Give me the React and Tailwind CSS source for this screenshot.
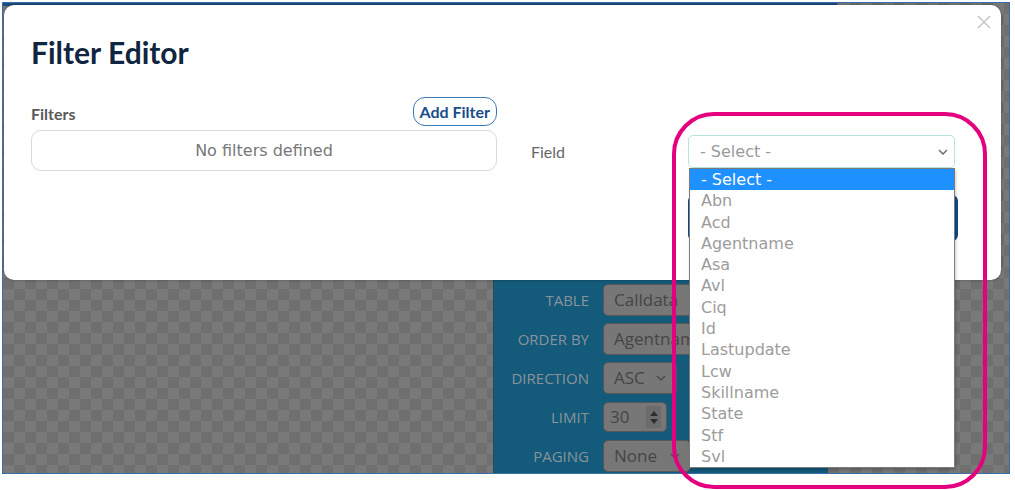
import React from "react";

const fields = [
  "Abn",
  "Acd",
  "Agentname",
  "Asa",
  "Avl",
  "Ciq",
  "Id",
  "Lastupdate",
  "Lcw",
  "Skillname",
  "State",
  "Stf",
  "Svl",
];

const gothic = "font-['DejaVu_Sans',sans-serif]";
const sans = "font-['Lato','Open_Sans',sans-serif]";
const panelFont = "font-['Open_Sans',sans-serif]";

function Chevron({ className = "" }) {
  return (
    <svg width="10" height="6" viewBox="0 0 10 6" className={className}>
      <polyline points="1,1 5,5 9,1" fill="none" stroke="currentColor" strokeWidth="1.4" />
    </svg>
  );
}

function PanelRow({ label, children }) {
  return (
    <div className="flex items-center h-[32px]">
      <div className="w-[95px] text-right text-[15px] text-[#8a939a] uppercase">{label}</div>
      <div className="ml-[14px] flex">{children}</div>
    </div>
  );
}

function PanelInput({ width, children }) {
  return (
    <div
      className={`${width} h-[32px] flex items-center justify-between rounded-[5px] border border-[#575757] bg-[#777777] px-[10px] text-[17px] text-[#454545]`}
    >
      {children}
    </div>
  );
}

export default function App() {
  return (
    <div className={`relative w-[1015px] h-[490px] bg-white overflow-hidden ${sans}`}>
      {/* captured page with modal backdrop */}
      <div className="relative ml-[2px] mt-[2px] w-[1008px] h-[472px] border border-[#3a6ea8] overflow-hidden bg-[conic-gradient(#6f6f6f_25%,#797979_0_50%,#6f6f6f_0_75%,#797979_0)] bg-[length:22px_22px]">
        <div className="h-[3px] w-[834px] bg-[#1d4b7c]" />

        {/* query settings panel behind the dialog */}
        <div className={`ml-[490px] mt-[269px] w-[335px] h-[200px] bg-[#135a7b] border-l border-[#2a4a5a] pt-[9px] flex flex-col gap-[7px] ${panelFont}`}>
          <PanelRow label="Table">
            <PanelInput width="w-[200px]">Calldata</PanelInput>
          </PanelRow>
          <PanelRow label="Order by">
            <PanelInput width="w-[200px]">Agentname</PanelInput>
          </PanelRow>
          <PanelRow label="Direction">
            <PanelInput width="w-[74px]">
              <span>ASC</span>
              <Chevron className="text-[#4a4a4a]" />
            </PanelInput>
          </PanelRow>
          <PanelRow label="Limit">
            <div className="w-[64px] h-[30px] flex items-center justify-between rounded-[5px] border border-[#575757] bg-[#777777] pl-[6px] pr-[5px] text-[17px] text-[#454545]">
              <span>30</span>
              <div className="w-[15px] h-[22px] bg-[#6c6c6c] flex flex-col items-center justify-center gap-[3px]">
                <div className="w-0 h-0 border-x-[4px] border-x-transparent border-b-[5px] border-b-[#2e2e2e]" />
                <div className="w-0 h-0 border-x-[4px] border-x-transparent border-t-[5px] border-t-[#2e2e2e]" />
              </div>
            </div>
          </PanelRow>
          <PanelRow label="Paging">
            <PanelInput width="w-[88px]">
              <span>None</span>
              <Chevron className="text-[#4a4a4a]" />
            </PanelInput>
          </PanelRow>
        </div>

        {/* filter editor dialog */}
        <div className="absolute left-[1px] top-[2px] w-[997px] h-[275px] bg-white rounded-[10px] shadow-[0_0_3px_rgba(0,0,0,0.35)]">
          <button className="absolute right-[10px] top-[10px] w-[14px] h-[14px]">
            <svg width="14" height="14" viewBox="0 0 14 14">
              <path d="M1 1 L13 13 M13 1 L1 13" stroke="#c9c9c9" strokeWidth="1.6" />
            </svg>
          </button>

          <div className="pl-[27px] pt-[30px]">
            <h2 className="text-[30px] leading-[34px] font-bold text-[#0f2540]">Filter Editor</h2>

            <div className="flex mt-[28px]">
              <div className="w-[466px]">
                <div className="flex items-end justify-between">
                  <span className="text-[16px] font-bold text-[#5a5a5a] leading-[20px] mb-[2px]">Filters</span>
                  <button className="h-[29px] px-[6px] rounded-[12px] border-[1.5px] border-[#3a78bb] text-[16px] font-bold text-[#1a4e8a]">
                    Add Filter
                  </button>
                </div>
                <div className={`mt-[4px] h-[41px] rounded-[10px] border border-[#d9d9d9] flex items-center justify-center text-[16px] text-[#777] ${gothic}`}>
                  No filters defined
                </div>
              </div>

              <div className="ml-[34px] mt-[38px] flex items-start">
                <span className="w-[157px] h-[33px] flex items-center text-[16px] text-[#666]">Field</span>
                <div className="flex flex-col">
                  <div className="relative w-[267px]">
                    <div className={`h-[33px] rounded-[5px] border border-[#b8e2de] flex items-center justify-between pl-[11px] pr-[6px] text-[16px] text-[#9a9a9a] ${gothic}`}>
                      <span>- Select -</span>
                      <Chevron className="text-[#666]" />
                    </div>

                    {/* open option list */}
                    <div className={`absolute z-10 left-[1px] top-[33px] w-[266px] bg-white border border-[#7b7b7b] shadow-[1px_2px_3px_rgba(0,0,0,0.2)] text-[16px] ${gothic}`}>
                      <div className="h-[21.3px] leading-[21.3px] pl-[11px] bg-[#1e90ff] text-white">- Select -</div>
                      {fields.map((f) => (
                        <div key={f} className="h-[21.3px] leading-[21.3px] pl-[11px] text-[#9c9c9c]">
                          {f}
                        </div>
                      ))}
                    </div>
                  </div>
                  <div className="mt-[27px] w-[270px] h-[46px] rounded-[6px] bg-[#0d4b8b]" />
                </div>
              </div>
            </div>
          </div>
        </div>
      </div>

      {/* highlight ring */}
      <div className="absolute left-[672px] top-[112px] w-[315px] h-[377px] rounded-[42px] border-[4px] border-[#e4007f]" />
    </div>
  );
}
